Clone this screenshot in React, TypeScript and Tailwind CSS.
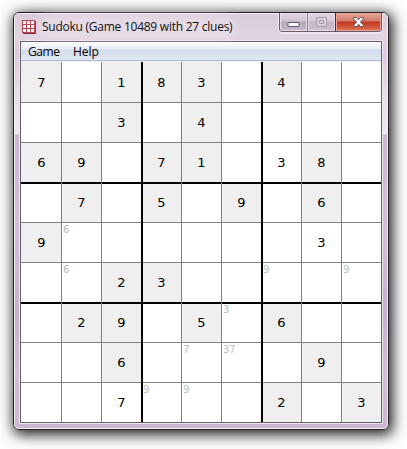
const board: string[][] = [
  ["7", "", "1", "8", "3", "", "4", "", ""],
  ["", "", "3", "", "4", "", "", "", ""],
  ["6", "9", "", "7", "1", "", "3*", "8", ""],
  ["", "7", "", "5", "", "9", "", "6", ""],
  ["9", "n6", "", "", "", "", "", "3*", ""],
  ["", "n6", "2", "3", "", "", "n9", "", "n9"],
  ["", "2", "9", "", "5", "n3", "6", "", ""],
  ["", "", "6", "", "n7", "n37", "", "9", ""],
  ["", "", "7*", "n9", "n9", "", "2", "", "3"],
];

// A trailing * is a number entered by the player; a leading n is a pencil note.
function Cell({ value, row, col }: { value: string; row: number; col: number }) {
  const note = value.startsWith("n");
  const entered = value.endsWith("*");
  const clue = value !== "" && !note && !entered;
  const left = col === 0 ? "border-l-0" : col % 3 === 0 ? "border-l-2 border-black" : "border-l border-[#808080]";
  const top = row === 0 ? "border-t-0" : row % 3 === 0 ? "border-t-2 border-black" : "border-t border-[#808080]";
  return (
    <div className={`h-10 w-10 ${left} ${clue ? "bg-[#efefef]" : "bg-white"}`}>
      <div className={`h-10 overflow-hidden ${top}`}>
        {note ? (
          <div className={`${row % 3 === 0 ? "-mt-px" : ""} ${col % 3 === 0 ? "" : "pl-px"} text-[10px] leading-[13px] text-[#bdbdbd]`}>
            {value.slice(1)}
          </div>
        ) : (
          <div
            className={`text-center text-[13px] leading-[16px] text-black ${row === 0 ? "pt-[13px]" : row % 3 === 0 ? "pt-[11px]" : "pt-[12px]"} ${col === 0 ? "pl-px" : col % 3 === 0 ? "pr-px" : ""}`}
          >
            {value.replace("*", "")}
          </div>
        )}
      </div>
    </div>
  );
}

function AppIcon() {
  return (
    <svg width="14" height="14" viewBox="0 0 14 14" shapeRendering="crispEdges">
      <path d="M1 1h13v13H1z" fill="#782a36" />
      <path d="M0 0h13v13H0z" fill="#b54350" />
      <path d="M1 1h3v3H1zM5 1h3v3H5zM9 1h3v3H9zM1 5h3v3H1zM5 5h3v3H5zM9 5h3v3H9zM1 9h3v3H1zM5 9h3v3H5zM9 9h3v3H9z" fill="#fff8f8" />
    </svg>
  );
}

function CaptionButtons() {
  return (
    <div className="flex h-[19px] w-[103px] overflow-hidden rounded-b-[4px] border border-t-0 border-[#67586a] shadow-[0_1px_0_1px_#f0e5f0]">
      <div className="flex w-[27px] items-start justify-center bg-[linear-gradient(to_bottom,#e4d8e2_0px,#d0c2d0_8px,#b5a6b7_9px,#c9bacb_18px)] pt-[9px] shadow-[inset_0_0_0_1px_#e8dce8]">
        <svg width="13" height="6" viewBox="0 0 13 6">
          <rect x="1" y="0.5" width="11" height="4" rx="0.5" fill="#fff" stroke="#5a586c" />
        </svg>
      </div>
      <div className="flex w-[28px] items-start justify-center border-l border-[#8a7a8c] bg-[linear-gradient(to_bottom,#e2d6e1_0px,#d5c8d5_8px,#c3b5c5_9px,#cfc1d1_18px)] pt-[4px] shadow-[inset_0_0_0_1px_#e8dce8]">
        <svg width="13" height="11" viewBox="0 0 13 11">
          <path d="M1.5 .5h10v9h-10z" fill="#d8cdd8" stroke="#a598a8" />
          <path d="M4.500 3.500h4v3h-4z" fill="#d8cdd8" stroke="#a598a8" />
        </svg>
      </div>
      <div className="flex flex-1 items-start justify-center border-l border-[#632322] bg-[linear-gradient(to_bottom,#e6aa9c_0px,#d2796a_8px,#c03822_9px,#d0573a_14px,#df8060_18px)] pt-[4px] shadow-[inset_0_0_0_1px_#eaa294]">
        <svg width="13" height="11" viewBox="0 0 13 11">
          <path d="M1.500.5h3l2 2.300 2-2.300h3v1L8.500 5l3 3.500v1h-3l-2-2.300-2 2.300h-3v-1L4.500 5l-3-3.500z" fill="#fff" stroke="#625566" />
        </svg>
      </div>
    </div>
  );
}

export default function App() {
  return (
    <div className="h-[449px] w-[407px] overflow-hidden bg-[#fdfdfd] pl-[13px] pt-[12px] font-['DejaVu_Sans','Liberation_Sans',sans-serif]">
      <div className="h-[418px] w-[376px] rounded-[6px] border border-[#252329] bg-[linear-gradient(to_bottom,#dacbda_0px,#e1d3e0_24px,#d9cbd9_40px,#e6dfe8_80px,#eee9f0_121px,#cbb7d0_122px,#d2bed7_220px,#c8b0cc_300px,#d1bdd5_360px,#ccb5d0_416px)] shadow-[2px_3px_13px_2px_rgba(0,0,0,0.85)]">
        <div className="h-[416px] w-[374px] rounded-[5px] border border-[#f5eef6] px-[5px]">
          <div className="flex h-[27px] justify-between">
            <div className="flex pl-[2px] pt-[6px]">
              <AppIcon />
              <div className="ml-[6px] mt-[-1px] h-[16px] whitespace-nowrap rounded-full bg-[#eee5ee]/50 font-['Open_Sans','Noto_Sans',sans-serif] text-[12px] leading-[16px] tracking-[-0.25px] text-[#111] shadow-[0_0_7px_5px_rgba(238,229,238,0.5)]">
                Sudoku (Game 10489 with 27 clues)
              </div>
            </div>
            <div className="-mt-px">
              <CaptionButtons />
            </div>
          </div>
          <div className="h-[382px] w-[362px] border border-[#665e6b] shadow-[0_0_0_1px_#eee5ef]">
            <div className="flex h-[20px] border-b border-[#f0f0f3] bg-white font-['Open_Sans','Noto_Sans',sans-serif] text-[12px] text-black">
              <div className="flex h-[19px] w-full border-b border-[#b3bbcd] bg-[linear-gradient(to_bottom,#fdfdfe_0px,#e8ecf5_7px,#d3daeb_8px,#dfe6f4_18px)] pl-[7px] leading-[20px]">
                <span className="w-[45px] tracking-[-0.4px]">Game</span>
                <span>Help</span>
              </div>
            </div>
            <div className="grid grid-cols-[repeat(9,40px)]">
              {board.flatMap((cells, row) =>
                cells.map((value, col) => <Cell key={`${row}-${col}`} value={value} row={row} col={col} />)
              )}
            </div>
          </div>
        </div>
      </div>
    </div>
  );
}
